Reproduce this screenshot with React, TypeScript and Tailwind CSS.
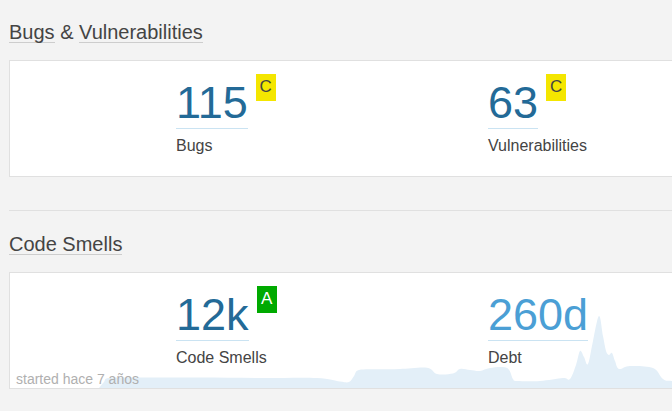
import React from "react";

// debt history sparkline, page coords (x, y)
const debtPts: [number, number][] = [
    [99, 387], [104, 381], [109, 377], [140, 376.5], [200, 376.5], [260, 377], [317, 377],
    [340, 380.5], [349, 381], [354, 375], [359, 369], [380, 368.3], [400, 368], [427, 366.7],
    [437, 373], [453, 372.5], [460, 368], [470, 369], [480, 370], [490, 367], [507, 367],
    [513, 378], [517, 380], [540, 380], [563, 377], [570, 378], [576, 364], [580, 350],
    [584, 356], [588, 363], [593, 340], [599, 315], [603, 335], [606, 350], [609, 354],
    [612, 352], [615, 360], [619, 368], [630, 365], [653, 367], [663, 378], [672, 380],
    [700, 381],
];

const smoothPath = (pts: [number, number][]) => {
    let d = `M${pts[0][0]},${pts[0][1]}`;
    for (let i = 0; i < pts.length - 1; i++) {
        const p0 = pts[i - 1] || pts[i];
        const p1 = pts[i];
        const p2 = pts[i + 1];
        const p3 = pts[i + 2] || p2;
        const c1x = p1[0] + (p2[0] - p0[0]) / 6;
        const c1y = p1[1] + (p2[1] - p0[1]) / 6;
        const c2x = p2[0] - (p3[0] - p1[0]) / 6;
        const c2y = p2[1] - (p3[1] - p1[1]) / 6;
        d += ` C${c1x.toFixed(1)},${c1y.toFixed(1)} ${c2x.toFixed(1)},${c2y.toFixed(1)} ${p2[0]},${p2[1]}`;
    }
    return d + " L710,388 L99,388 Z";
};

const Heading = ({ parts }: { parts: string[] }) => (
    <h2 className="text-[20px] leading-5 text-[#444]">
        {parts.map((p, i) => (
            <React.Fragment key={p}>
                {i > 0 && " & "}
                <span className="inline-block border-b border-[#cdcdcd]">{p}</span>
            </React.Fragment>
        ))}
    </h2>
);

const Measure = ({
    value,
    label,
    rating,
    light,
}: {
    value: string;
    label: string;
    rating?: "A" | "C";
    light?: boolean;
}) => (
    <div className="w-[312px]">
        <div className="flex items-start">
            <span
                className={`inline-block border-b border-[#cae3f2] pb-[3px] text-[45px] leading-[45px] ${
                    light ? "text-[#4b9fd5]" : "text-[#236a97]"
                }`}
            >
                {value}
            </span>
            {rating && (
                <span
                    className={`ml-2 -mt-[6px] h-[27px] w-[20px] pt-[3px] text-center text-[17px] leading-5 ${
                        rating === "A" ? "bg-[#00aa00] text-white" : "bg-[#f4e600] text-[#444]"
                    }`}
                >
                    {rating}
                </span>
            )}
        </div>
        <div className="mt-[7px] text-[16px] leading-5 text-[#444]">{label}</div>
    </div>
);

export default function App() {
    return (
        <div className="h-[411px] w-full overflow-hidden bg-[#f3f3f3] font-['Liberation_Sans',Arial,sans-serif]">
            <div className="w-[1100px] pl-[9px] pt-[22px]">
                <Heading parts={["Bugs", "Vulnerabilities"]} />
                <div className="mt-[17px] flex border border-[#e0e0e0] bg-white pt-[19px] pb-[20px] pl-[166px]">
                    <Measure value="115" label="Bugs" rating="C" />
                    <Measure value="63" label="Vulnerabilities" rating="C" />
                </div>

                <div className="mt-[33px] h-px bg-[#e0e0e0]" />

                <div className="mt-[23px]">
                    <Heading parts={["Code Smells"]} />
                </div>
                <div className="relative mt-[17px] flex border border-[#e0e0e0] bg-white pt-[19px] pb-[20px] pl-[166px]">
                    <svg
                        className="absolute bottom-0 left-0"
                        width={700}
                        height={80}
                        viewBox="10 307 700 80"
                    >
                        <path d={smoothPath(debtPts)} fill="#e3eff8" />
                    </svg>
                    <div className="relative flex">
                        <Measure value="12k" label="Code Smells" rating="A" />
                        <Measure value="260d" label="Debt" light />
                    </div>
                    <span className="absolute bottom-[1px] left-[6px] text-[14px] leading-4 text-[#b0b0b0]">
                        started hace 7 años
                    </span>
                </div>
            </div>
        </div>
    );
}
